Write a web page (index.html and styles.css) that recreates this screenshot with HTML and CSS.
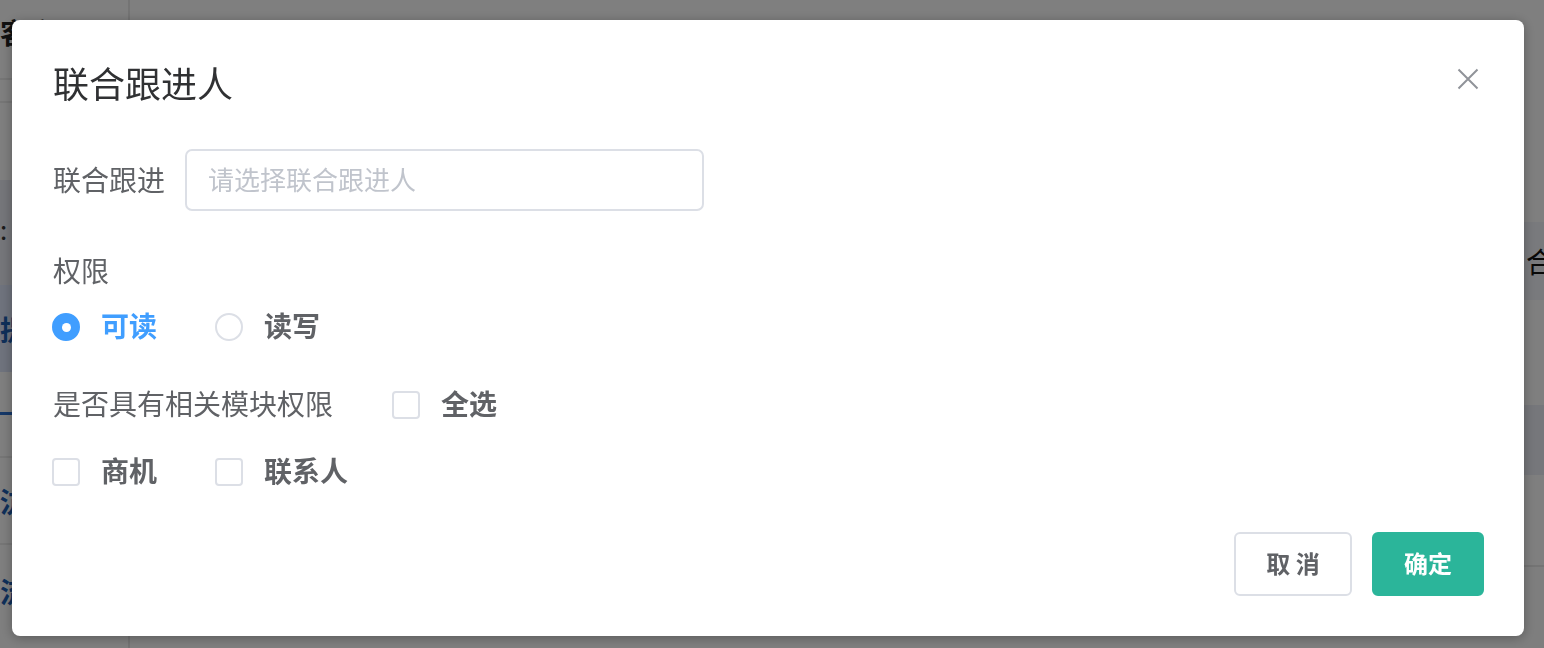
FILE: index.html
```html
<!DOCTYPE html>
<html lang="zh-CN">
<head>
<meta charset="utf-8">
<title>联合跟进人</title>
<link rel="stylesheet" href="styles.css">
</head>
<body>
<div class="page">
  <div class="col-left">
    <div class="row r-head"><span class="head-text">客户</span><span class="head-text2">丕</span></div>
    <div class="row r-a"></div>
    <div class="row r-b"></div>
    <div class="row r-c"><span class="muted">:</span></div>
    <div class="row r-d"><span class="link">提</span></div>
    <div class="row r-e"><span class="tabline"></span></div>
    <div class="row r-f"><span class="link">沆</span></div>
    <div class="row r-g"><span class="link">流</span></div>
  </div>
  <div class="col-mid"></div>
  <div class="col-right">
    <div class="rrow rr-a"></div>
    <div class="rrow rr-b"><span class="rtext">合</span></div>
    <div class="rrow rr-c"></div>
    <div class="rrow rr-d"></div>
    <div class="rrow rr-e"></div>
    <div class="rrow rr-f"></div>
  </div>
</div>
<div class="mask"></div>
<div class="dialog">
  <div class="dialog-header">
    <span class="dialog-title">联合跟进人</span>
    <button class="close" aria-label="关闭">
      <svg width="22" height="22" viewBox="0 0 22 22"><path d="M1.5 1.5 L20.5 20.5 M20.5 1.5 L1.5 20.5" stroke="#909399" stroke-width="2" fill="none"/></svg>
    </button>
  </div>
  <div class="dialog-body">
    <div class="form-item">
      <label class="form-label">联合跟进</label>
      <div class="input">请选择联合跟进人</div>
    </div>
    <div class="section-label">权限</div>
    <div class="radio-group">
      <label class="radio checked"><span class="radio-dot"></span><span class="radio-text">可读</span></label>
      <label class="radio"><span class="radio-dot"></span><span class="radio-text">读写</span></label>
    </div>
    <div class="module-row">
      <span class="module-label">是否具有相关模块权限</span>
      <label class="check"><span class="box"></span><span class="check-text">全选</span></label>
    </div>
    <div class="check-group">
      <label class="check"><span class="box"></span><span class="check-text">商机</span></label>
      <label class="check"><span class="box"></span><span class="check-text">联系人</span></label>
    </div>
  </div>
  <div class="dialog-footer">
    <button class="btn btn-default">取 消</button>
    <button class="btn btn-primary">确定</button>
  </div>
</div>
</body>
</html>
```

FILE: styles.css
```css
* { box-sizing: border-box; }
html, body { margin: 0; padding: 0; }
body {
  width: 1544px;
  height: 648px;
  overflow: hidden;
  font-family: "Noto Sans CJK SC", "Noto Sans", sans-serif;
  background: #ffffff;
  color: #606266;
}

/* background page */
.page {
  display: grid;
  grid-template-columns: 130px 1fr 24px;
  height: 648px;
}
.col-left {
  border-right: 2px solid #e8e8e8;
  display: flex;
  flex-direction: column;
}
.row { border-bottom: 2px solid #ececec; overflow: hidden; white-space: nowrap; }
.r-head { height: 80px; display: flex; align-items: center; }
.head-text { font-size: 28px; font-weight: 700; color: #222; margin-left: 0; margin-top: -14px; }
.head-text2 { font-size: 28px; color: #222; margin-left: 84px; margin-top: -14px; }
.r-a { height: 23px; }
.r-b { height: 77px; border-bottom: none; }
.r-c { height: 105px; background: #eaecf4; border-bottom: none; }
.muted { font-size: 26px; color: #333; display: block; margin-top: 30px; }
.r-d { height: 87px; background: #dee6fa; display: flex; align-items: center; border-bottom: none; }
.link { font-size: 28px; font-weight: 700; color: #1e5fb4; }
.r-e { height: 86px; display: flex; align-items: flex-end; }
.tabline { display: block; width: 30px; height: 3px; background: #2a6fd0; margin-bottom: 41px; }
.r-f { height: 87px; display: flex; align-items: center; }
.r-g { height: 91px; display: flex; align-items: center; border-bottom: none; }
.col-mid { background: #fff; }
.col-right { display: flex; flex-direction: column; }
.rrow { overflow: hidden; white-space: nowrap; }
.rr-a { height: 222px; }
.rr-b { height: 78px; background: #f2f4fa; display: flex; align-items: center; }
.rtext { font-size: 28px; color: #111; margin-left: 6px; }
.rr-c { height: 105px; }
.rr-d { height: 70px; background: #eceef6; }
.rr-e { height: 92px; border-bottom: 2px solid #e8e8e8; }
.rr-f { flex: 1; background: #fcfcfc; }

/* modal */
.mask {
  position: fixed;
  inset: 0;
  background: rgba(0, 0, 0, 0.5);
}
.dialog {
  position: fixed;
  left: 12px;
  top: 20px;
  width: 1512px;
  height: 616px;
  background: #fff;
  border-radius: 8px;
  box-shadow: 0 2px 12px rgba(0, 0, 0, 0.3);
  padding: 0 40px 40px 41px;
  display: flex;
  flex-direction: column;
}
.dialog-header {
  display: flex;
  align-items: center;
  justify-content: space-between;
  padding-top: 47px;
  height: 83px;
}
.dialog-title {
  font-size: 36px;
  line-height: 36px;
  color: #303133;
  margin-top: -6px;
}
.close {
  border: none;
  background: transparent;
  padding: 0;
  width: 22px;
  height: 22px;
  margin-right: 5px;
  margin-top: -12px;
  display: flex;
}

.dialog-body { display: flex; flex-direction: column; }
.form-item {
  display: flex;
  align-items: center;
  margin-top: 46px;
  height: 62px;
}
.form-label {
  font-size: 28px;
  line-height: 60px;
  height: 62px;
  color: #606266;
  width: 132px;
}
.input {
  width: 519px;
  height: 62px;
  border: 2px solid #dcdfe6;
  border-radius: 7px;
  padding-left: 21px;
  font-size: 26px;
  line-height: 56px;
  color: #c0c4cc;
}
.section-label {
  margin-top: 41px;
  font-size: 28px;
  line-height: 36px;
  height: 40px;
  color: #606266;
}
.radio-group {
  display: flex;
  margin-top: 15px;
  height: 40px;
  align-items: center;
}
.radio {
  display: flex;
  align-items: center;
  margin-right: 59px;
}
.radio-dot {
  width: 28px;
  height: 28px;
  border-radius: 50%;
  border: 2px solid #dcdfe6;
  background: #fff;
  display: flex;
  align-items: center;
  justify-content: center;
  margin-left: -1px;
}
.radio.checked .radio-dot {
  background: #409eff;
  border-color: #409eff;
}
.radio.checked .radio-dot::after {
  content: "";
  width: 9px;
  height: 9px;
  border-radius: 50%;
  background: #fff;
}
.radio-text {
  font-size: 28px;
  line-height: 36px;
  height: 40px;
  font-weight: 700;
  color: #606266;
  margin-left: 21px;
}
.radio.checked .radio-text { color: #409eff; }

.module-row {
  display: flex;
  align-items: center;
  margin-top: 38px;
  height: 40px;
}
.module-label {
  font-size: 28px;
  line-height: 36px;
  height: 40px;
  color: #606266;
  width: 340px;
}
.check {
  display: flex;
  align-items: center;
  margin-right: 59px;
}
.box {
  width: 28px;
  height: 28px;
  border: 2px solid #dcdfe6;
  border-radius: 4px;
  background: #fff;
  margin-left: -1px;
}
.check-text {
  font-size: 28px;
  line-height: 36px;
  height: 40px;
  font-weight: 700;
  color: #606266;
  margin-left: 21px;
}
.check-group {
  display: flex;
  align-items: center;
  margin-top: 27px;
  height: 40px;
}

.dialog-footer {
  margin-top: auto;
  display: flex;
  justify-content: flex-end;
  gap: 20px;
}
.btn {
  height: 64px;
  border-radius: 6px;
  font-family: inherit;
  font-size: 24px;
  line-height: 56px;
  font-weight: 700;
  padding: 0 0 2px;
  cursor: pointer;
}
.btn-default {
  width: 118px;
  background: #fff;
  border: 2px solid #dcdfe6;
  color: #606266;
}
.btn-primary {
  width: 112px;
  background: #2bb59a;
  border: 2px solid #2bb59a;
  color: #fff;
}
```
